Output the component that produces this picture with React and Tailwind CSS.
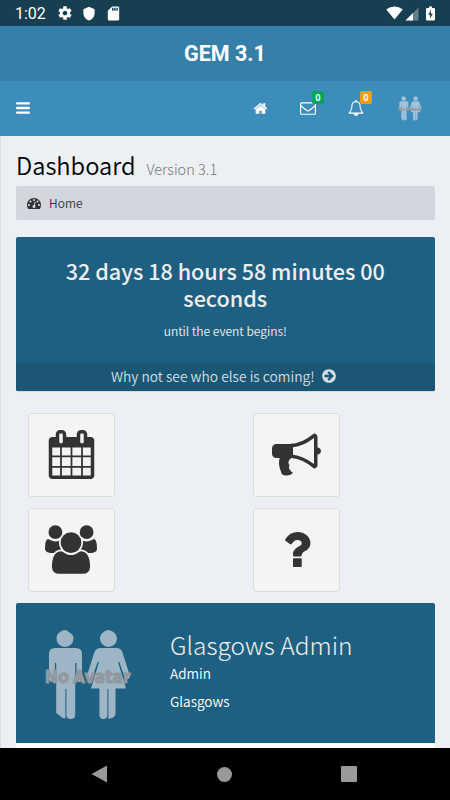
import React from 'react';

// Font Awesome 4 glyphs, all on a 1792 unit grid
const ICONS = {
  bars: 'M1664 1344v128q0 26-19 45t-45 19h-1408q-26 0-45-19t-19-45v-128q0-26 19-45t45-19h1408q26 0 45 19t19 45zm0-512v128q0 26-19 45t-45 19h-1408q-26 0-45-19t-19-45v-128q0-26 19-45t45-19h1408q26 0 45 19t19 45zm0-512v128q0 26-19 45t-45 19h-1408q-26 0-45-19t-19-45v-128q0-26 19-45t45-19h1408q26 0 45 19t19 45z',
  home: 'M1472 992v480q0 26-19 45t-45 19h-384v-384h-256v384h-384q-26 0-45-19t-19-45v-480q0-1 .5-3t.5-3l575-474 575 474q1 2 1 6zm223-69l-62 74q-8 9-21 11h-3q-13 0-21-7l-692-577-692 577q-12 8-24 7-13-2-21-11l-62-74q-8-10-7-23.5t11-21.5l719-599q32-26 76-26t76 26l244 204v-195q0-14 9-23t23-9h192q14 0 23 9t9 23v408l219 182q10 8 11 21.5t-7 23.5z',
  envelope: 'M1664 1504v-768q-32 36-69 66-268 206-426 338-51 43-83 67t-86.5 48.5-102.5 24.5h-2q-48 0-102.5-24.5t-86.5-48.5-83-67q-158-132-426-338-37-30-69-66v768q0 13 9.5 22.5t22.5 9.5h1472q13 0 22.5-9.5t9.5-22.5zm0-1051v-24.5l-.5-13-3-12.5-5.5-9-9-7.5-14-2.5h-1472q-13 0-22.5 9.5t-9.5 22.5q0 168 147 284 193 152 401 317 6 5 35 29.5t46 37.5 44.5 31.5 50.5 27.5 43 9h2q20 0 43-9t50.5-27.5 44.5-31.5 46-37.5 35-29.5q208-165 401-317 54-43 100.5-115.5t46.5-131.5zm128-37v1088q0 66-47 113t-113 47h-1472q-66 0-113-47t-47-113v-1088q0-66 47-113t113-47h1472q66 0 113 47t47 113z',
  bell: 'M912 1696q0-16-16-16-59 0-101.5-42.5t-42.5-101.5q0-16-16-16t-16 16q0 73 51.5 124.5t124.5 51.5q16 0 16-16zm-666-288h1300q-266-300-266-832 0-51-24-105t-69-103-121.5-80.5-169.5-31.5-169.5 31.5-121.5 80.5-69 103-24 105q0 532-266 832zm1482 0q0 52-38 90t-90 38h-448q0 106-75 181t-181 75-181-75-75-181h-448q-52 0-90-38t-38-90q50-42 91-88t85-119.5 74.5-158.5 50-206 19.5-260q0-152 117-282.5t307-158.5q-8-19-8-39 0-40 28-68t68-28 68 28 28 68q0 20-8 39 190 28 307 158.5t117 282.5q0 139 19.5 260t50 206 74.5 158.5 85 119.5 91 88z',
  tachometer: 'M384 1152q0-53-37.5-90.5t-90.5-37.5-90.5 37.5-37.5 90.5 37.5 90.5 90.5 37.5 90.5-37.5 37.5-90.5zm192-448q0-53-37.5-90.5t-90.5-37.5-90.5 37.5-37.5 90.5 37.5 90.5 90.5 37.5 90.5-37.5 37.5-90.5zm428 481l101-382q6-26-7.5-48.5t-38.5-29.5-48 6.5-30 39.5l-101 382q-60 5-107 43.5t-63 98.5q-20 77 20 146t117 89 146-20 89-117q16-60-6-117t-72-91zm660-33q0-53-37.5-90.5t-90.5-37.5-90.5 37.5-37.5 90.5 37.5 90.5 90.5 37.5 90.5-37.5 37.5-90.5zm-640-640q0-53-37.5-90.5t-90.5-37.5-90.5 37.5-37.5 90.5 37.5 90.5 90.5 37.5 90.5-37.5 37.5-90.5zm448 192q0-53-37.5-90.5t-90.5-37.5-90.5 37.5-37.5 90.5 37.5 90.5 90.5 37.5 90.5-37.5 37.5-90.5zm320 448q0 261-141 483-19 29-54 29h-1402q-35 0-54-29-141-221-141-483 0-182 71-348t191-286 286-191 348-71 348 71 286 191 191 286 71 348z',
  arrow: 'M1413 896q0-27-18-45l-91-91-362-362q-18-18-45-18t-45 18l-91 91q-18 18-18 45t18 45l189 189h-502q-26 0-45 19t-19 45v128q0 26 19 45t45 19h502l-189 189q-18 18-18 45t18 45l91 91q18 18 45 18t45-18l362-362 91-91q18-18 18-45zm251 0q0 209-103 385.5t-279.5 279.5-385.5 103-385.5-103-279.5-279.5-103-385.5 103-385.5 279.5-279.5 385.5-103 385.5 103 279.5 279.5 103 385.5z',
  calendar: 'M192 1664h288v-288h-288v288zm352 0h320v-288h-320v288zm-352-352h288v-320h-288v320zm352 0h320v-320h-320v320zm-352-384h288v-288h-288v288zm736 736h320v-288h-320v288zm-384-736h320v-288h-320v288zm768 736h288v-288h-288v288zm-384-352h320v-320h-320v320zm-352-864v-288q0-13-9.5-22.5t-22.5-9.5h-64q-13 0-22.5 9.5t-9.5 22.5v288q0 13 9.5 22.5t22.5 9.5h64q13 0 22.5-9.5t9.5-22.5zm736 864h288v-320h-288v320zm-384-384h320v-288h-320v288zm384 0h288v-288h-288v288zm32-480v-288q0-13-9.5-22.5t-22.5-9.5h-64q-13 0-22.5 9.5t-9.5 22.5v288q0 13 9.5 22.5t22.5 9.5h64q13 0 22.5-9.5t9.5-22.5zm384-64v1280q0 52-38 90t-90 38h-1408q-52 0-90-38t-38-90v-1280q0-52 38-90t90-38h128v-96q0-66 47-113t113-47h64q66 0 113 47t47 113v96h384v-96q0-66 47-113t113-47h64q66 0 113 47t47 113v96h128q52 0 90 38t38 90z',
  bullhorn: 'M1664 640q53 0 90.5 37.5t37.5 90.5-37.5 90.5-90.5 37.5v384q0 52-38 90t-90 38q-417-347-812-380-58 19-91 66t-31 100.5 40 92.5q-20 33-23 65.5t6 58 33.5 55 48 50 61.5 50.5q-29 58-111.5 83t-168.5 11.5-132-55.5q-7-23-29.5-87.5t-32-94.5-23-89-15-101 3.5-98.5 22-110.5h-122q-66 0-113-47t-47-113v-192q0-66 47-113t113-47h480q435 0 896-384 52 0 90 38t38 90v384zm-128 604v-954q-394 302-768 343v270q377 42 768 341z',
  users: 'M593 896q-162 5-265 128h-134q-82 0-138-40.5t-56-118.5q0-353 124-353 6 0 43.5 21t97.5 42.5 119 21.5q67 0 133-23-5 37-5 66 0 139 81 256zm1071 637q0 120-73 189.5t-194 69.5h-874q-121 0-194-69.5t-73-189.5q0-53 3.5-103.5t14-109 26.5-108.5 43-97.5 62-81 85.5-53.5 111.5-20q10 0 43 21.5t73 48 107 48 135 21.5 135-21.5 107-48 73-48 43-21.5q61 0 111.5 20t85.5 53.5 62 81 43 97.5 26.5 108.5 14 109 3.5 103.5zm-1024-1277q0 106-75 181t-181 75-181-75-75-181 75-181 181-75 181 75 75 181zm704 384q0 159-112.5 271.5t-271.5 112.5-271.5-112.5-112.5-271.5 112.5-271.5 271.5-112.5 271.5 112.5 112.5 271.5zm576 225q0 78-56 118.5t-138 40.5h-134q-103-123-265-128 81-117 81-256 0-29-5-66 66 23 133 23 59 0 119-21.5t97.5-42.5 43.5-21q124 0 124 353zm-128-609q0 106-75 181t-181 75-181-75-75-181 75-181 181-75 181 75 75 181z',
  question: 'M1088 1256v240q0 16-12 28t-28 12h-240q-16 0-28-12t-12-28v-240q0-16 12-28t28-12h240q16 0 28 12t12 28zm316-600q0 54-15.5 101t-35 76.5-55 59.5-57.5 43.5-61 35.5q-41 23-68.5 65t-27.5 67q0 17-12 32.5t-28 15.5h-240q-15 0-25.5-18.5t-10.5-37.5v-45q0-83 65-156.5t143-108.5q59-27 84-56t25-76q0-42-46.5-74t-107.5-32q-65 0-108 29-35 25-107 115-13 16-31 16-12 0-25-8l-164-125q-13-10-15.5-25t5.5-28q160-266 464-266 80 0 161 31t146 83 106 127.5 41 158.5z',
};

const TILES = [
  { name: 'calendar', label: 'Calendar' },
  { name: 'bullhorn', label: 'News' },
  { name: 'users', label: 'Attendees', wide: true },
  { name: 'question', label: 'Help' },
];

function Icon({ name, className, wide }) {
  return (
    <svg viewBox={wide ? '0 0 1920 1792' : '0 0 1792 1792'} fill="currentColor" className={className} aria-hidden="true">
      <path d={ICONS[name]} />
    </svg>
  );
}

// Placeholder shown until the user uploads a photo
function Avatar({ className }) {
  return (
    <svg viewBox="0 0 88 90" className={className}>
      <g fill="currentColor">
        <path d="M21 0Q23 0 25.500 2.500Q29.500 4.500 29.500 8.500A8.500 8.500 0 0 1 12.500 8.500Q12.500 4 16 2Q18.500 0 21 0z" />
        <path d="M11 18h21q6 0 6 6v25q0 3-2.700 3T32.500 49V33h-1.300v52q0 4-4.400 4t-4.400-4V59h-1v29.500q-2 0-4-1.500l-5.200-4V33h-1.300v16q0 3-2.600 3T5 49V24q0-6 6-6z" />
        <path d="M64 0Q67.500 0 70 2.500Q73 5 73 8.500A8.500 8.500 0 0 1 56 8.500Q56 4.500 59 2.500Q61.500 0 64 0z" />
        <path d="M56.500 18h16q4.500 0 6 4.500l7 22q1 3.500-1.500 4.500t-3.700-2.500L75.300 32H74l8 26.500H71.500V83q0 3.500-3.500 5l-3.600 1V59h-1v26q0 4-4 4t-4-4V58.500H47L55 32h-1.300L48.500 46.500q-1.200 3.500-3.700 2.500t-1.500-4.500l7-22q1.700-4.500 6.200-4.500z" />
      </g>
      <text
        x="43.500"
        y="53"
        textAnchor="middle"
        textLength="86"
        lengthAdjust="spacingAndGlyphs"
        className="font-['Noto_Sans_CJK_SC',sans-serif] text-[17px] font-bold"
        fill="#999da2"
        stroke="#8a949c"
        strokeWidth="0.9"
      >
        No Avatar
      </text>
    </svg>
  );
}

function StatusBar() {
  return (
    <div className="flex h-[26px] shrink-0 items-center justify-between bg-[#163f52] pr-[15px] pl-[15px] text-white">
      <div className="flex items-center">
        <span className="w-[43px] pt-0.5 font-[Roboto,sans-serif] text-base leading-6">1:02</span>
        <svg viewBox="0 0 24 24" className="-ml-px h-4 w-4" fill="currentColor">
          <path d="M19.430 12.980c.04-.32.07-.64.07-.98s-.03-.66-.07-.98l2.110-1.650c.19-.15.24-.42.12-.64l-2-3.460c-.12-.22-.39-.3-.61-.22l-2.490 1c-.52-.4-1.080-.73-1.690-.98l-.38-2.650C14.460 2.180 14.250 2 14 2h-4c-.25 0-.46.18-.49.42l-.38 2.650c-.61.25-1.170.59-1.690.98l-2.490-1c-.23-.09-.49 0-.61.22l-2 3.460c-.13.22-.07.49.12.64l2.110 1.650c-.04.32-.07.65-.07.98s.03.66.07.98l-2.110 1.650c-.19.15-.24.42-.12.64l2 3.460c.12.22.39.3.61.22l2.490-1c.52.4 1.080.73 1.690.98l.38 2.650c.03.24.24.42.49.42h4c.25 0 .46-.18.49-.42l.38-2.650c.61-.25 1.170-.59 1.690-.98l2.490 1c.23.09.49 0 .61-.22l2-3.460c.12-.22.07-.49-.12-.64l-2.110-1.650zM12 15.500c-1.930 0-3.500-1.570-3.500-3.500s1.570-3.500 3.500-3.500 3.500 1.570 3.500 3.500-1.570 3.500-3.500 3.500z" />
        </svg>
        <svg viewBox="0 0 24 24" className="ml-2 h-[15px] w-4" fill="currentColor">
          <path d="M12 1L3 5v6c0 5.550 3.840 10.740 9 12 5.160-1.260 9-6.450 9-12V5l-9-4z" />
        </svg>
        <svg viewBox="0 0 24 24" className="ml-2 h-[17px] w-[17px]" fill="currentColor">
          <path d="M18 2h-8L4 8v12c0 1.100.9 2 2 2h12c1.100 0 2-.9 2-2V4c0-1.100-.9-2-2-2zm-6 6h-2V4h2v4zm3 0h-2V4h2v4zm3 0h-2V4h2v4z" />
        </svg>
      </div>
      <div className="flex items-center">
        <svg viewBox="0 0 17 14" className="h-3.5 w-[17px]" fill="currentColor">
          <path d="M8.500 13.500L.3 3.400Q3.800.5 8.500.5t8.200 2.900z" />
        </svg>
        <svg viewBox="0 0 14 14" className="mt-px ml-0.5 h-3.5 w-3.5">
          <path d="M13.500 .5v13H.5z" fill="#647f8b" />
          <path d="M8 6v7.500H.5z" fill="#fff" />
        </svg>
        <svg viewBox="0 0 9 15" className="ml-[7px] h-[15px] w-[9px]">
          <path d="M3 .5h3v1.500h2q1 0 1 1v10.500q0 1-1 1H1q-1 0-1-1V3q0-1 1-1h2z" fill="#fff" />
          <path d="M5 4L2.200 8.800h1.900V12.500L6.800 7.700H5z" fill="#163f52" />
        </svg>
      </div>
    </div>
  );
}

function NavBar() {
  return (
    <nav className="flex h-[55px] shrink-0 items-center bg-[#3c8dbc] pb-px pl-4 text-white">
      <Icon name="bars" className="-ml-px h-4 w-4" />
      <Icon name="home" className="ml-[222px] h-[15px] w-[15px]" />
      <div className="relative ml-8">
        <Icon name="envelope" className="h-4 w-4" />
        <span className="absolute -top-[9px] left-3 h-[13px] w-3 rounded-[2px] bg-[#00a65a] text-center font-['Noto_Sans_CJK_SC',sans-serif] text-[9px] leading-[13px] font-bold">
          0
        </span>
      </div>
      <div className="relative ml-8">
        <Icon name="bell" className="h-4 w-4" />
        <span className="absolute -top-[9px] left-3 h-[13px] w-3 rounded-[2px] bg-[#f39c12] text-center font-['Noto_Sans_CJK_SC',sans-serif] text-[9px] leading-[13px] font-bold">
          0
        </span>
      </div>
      <Avatar className="mt-px ml-[34px] h-[25px] w-6 text-[#a5c4d9]" />
    </nav>
  );
}

export default function App() {
  return (
    <div className="flex h-[800px] w-[450px] flex-col overflow-hidden bg-[#ecf0f5] font-['Noto_Sans_CJK_SC',sans-serif]">
      <StatusBar />
      <header className="flex h-[55px] shrink-0 items-center justify-center bg-[#367fa9] pt-px font-[Roboto,sans-serif] text-[21.5px] font-bold text-white">
        GEM 3.1
      </header>
      <NavBar />

      <main className="flex min-h-0 flex-1 flex-col overflow-hidden border-l border-[#d9dde3] pr-[15.5px] pl-[15px]">
        <div className="mt-3 flex h-[34px] shrink-0 items-baseline whitespace-nowrap">
          <h1 className="text-[23.7px] leading-[34px] font-[350] text-black">Dashboard</h1>
          <small className="ml-[11px] text-[14.5px] font-light text-[#777]">Version 3.1</small>
        </div>

        <div className="mt-1 flex h-[34px] shrink-0 items-center rounded-[2px] bg-[#d2d6de] pb-px pl-[11px] text-[#333]">
          <Icon name="tachometer" className="h-3.5 w-3.5" />
          <span className="ml-2 text-[12px] font-[350]">Home</span>
        </div>

        <section className="mt-[17px] flex h-[154px] shrink-0 flex-col rounded-[2px] bg-[#1e6082] text-center text-[#eee] shadow-[0_1px_1px_rgba(0,0,0,0.1)]">
          <h2 className="mt-[21px] px-8 text-[21.6px] leading-[26.5px] font-medium">
            32 days 18 hours 58 minutes 00 seconds
          </h2>
          <p className="mt-2.5 text-[12px] leading-5 font-[350]">until the event begins!</p>
          <a className="mt-auto flex h-7 items-center justify-center rounded-b-[2px] bg-[#1b5675] pr-[3px] pb-0.5 text-[13.8px] font-[350] text-[#d2dfe6]">
            Why not see who else is coming!
            <Icon name="arrow" className="ml-1.5 h-4 w-4" />
          </a>
        </section>

        <div className="mt-[22px] ml-3 grid shrink-0 grid-cols-[225px_1fr] gap-y-[11px]">
          {TILES.map((tile) => (
            <button
              key={tile.name}
              aria-label={tile.label}
              className="flex h-[84px] w-[87px] items-center justify-center rounded-[3px] border border-[#ddd] bg-[#f4f4f4] pr-px pb-px text-[#333]"
            >
              <Icon name={tile.name} wide={tile.wide} className={tile.wide ? 'h-[49px] w-[52px]' : 'h-[49px] w-[49px]'} />
            </button>
          ))}
        </div>

        <section className="mt-[11px] flex h-[140px] shrink-0 rounded-t-[2px] bg-[#1e6082] pl-7 text-white">
          <Avatar className="mt-[27px] h-[90px] w-[88px] shrink-0 text-[#9db5c4]" />
          <div className="ml-[38px] whitespace-nowrap">
            <h3 className="mt-[26px] text-[24.5px] leading-8 font-light text-[#eee]">Glasgows Admin</h3>
            <p className="mt-0.5 text-[13.6px] leading-5 font-[350]">Admin</p>
            <p className="mt-2 text-[13.6px] leading-5 font-[350]">Glasgows</p>
          </div>
        </section>
        <div className="h-[5px] shrink-0 bg-white" />
      </main>

      <footer className="flex h-[52px] shrink-0 items-center justify-between bg-black pr-[93px] pl-[91px] text-[#999]">
        <svg viewBox="0 0 16 18" className="h-[18px] w-4" fill="currentColor">
          <path d="M16 .5v17L.5 9z" />
        </svg>
        <span className="h-[15px] w-[15px] rounded-full bg-[#999]" />
        <span className="h-4 w-4 rounded-[1px] bg-[#999]" />
      </footer>
    </div>
  );
}
